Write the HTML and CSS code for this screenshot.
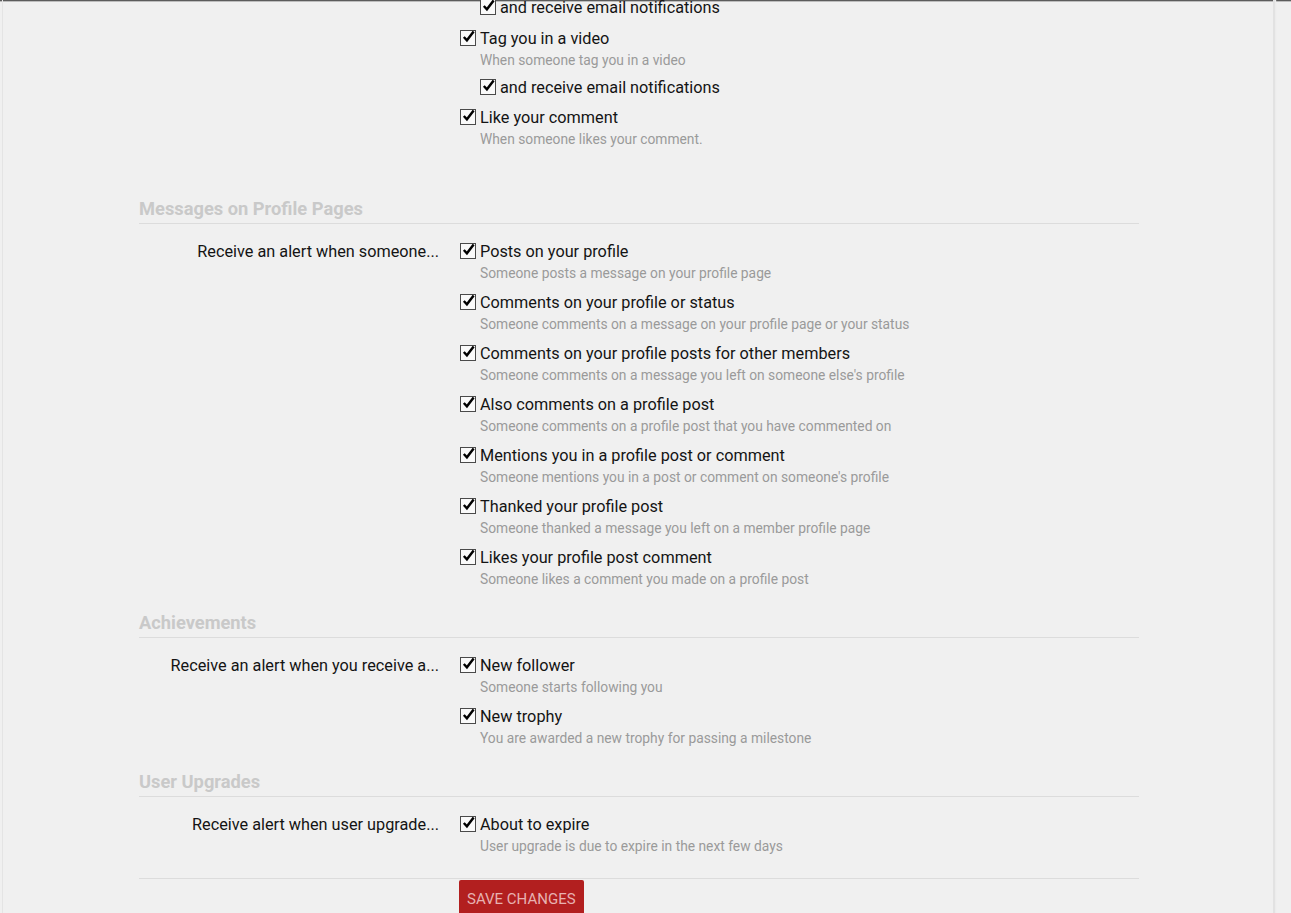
FILE: index.html
```html
<!DOCTYPE html>
<html lang="en">
<head>
<meta charset="utf-8">
<title>Alert Preferences</title>
<link rel="stylesheet" href="styles.css">
</head>
<body>
<div class="topbar"></div>
<div class="page">
  <form class="prefs">
    <div class="section first">
      <div class="unit">
        <div class="unit-label"></div>
        <ul class="opts">
          <li class="opt sub lead">
            <span class="cb"><svg viewBox="0 0 16 16"><path d="M3 7.5 L6.3 11 L13.5 1.5" /></svg></span>
            <span class="opt-text">and receive email notifications</span>
          </li>
          <li class="opt">
            <span class="cb"><svg viewBox="0 0 16 16"><path d="M3 7.5 L6.3 11 L13.5 1.5" /></svg></span>
            <span class="opt-text">Tag you in a video</span>
            <div class="hint">When someone tag you in a video</div>
            <div class="opt sub">
              <span class="cb"><svg viewBox="0 0 16 16"><path d="M3 7.5 L6.3 11 L13.5 1.5" /></svg></span>
              <span class="opt-text">and receive email notifications</span>
            </div>
          </li>
          <li class="opt">
            <span class="cb"><svg viewBox="0 0 16 16"><path d="M3 7.5 L6.3 11 L13.5 1.5" /></svg></span>
            <span class="opt-text">Like your comment</span>
            <div class="hint">When someone likes your comment.</div>
          </li>
        </ul>
      </div>
    </div>

    <div class="section">
      <h3 class="sec-head">Messages on Profile Pages</h3>
      <div class="unit">
        <div class="unit-label">Receive an alert when someone...</div>
        <ul class="opts">
          <li class="opt"><span class="cb"><svg viewBox="0 0 16 16"><path d="M3 7.5 L6.3 11 L13.5 1.5" /></svg></span><span class="opt-text">Posts on your profile</span><div class="hint">Someone posts a message on your profile page</div></li>
          <li class="opt"><span class="cb"><svg viewBox="0 0 16 16"><path d="M3 7.5 L6.3 11 L13.5 1.5" /></svg></span><span class="opt-text">Comments on your profile or status</span><div class="hint">Someone comments on a message on your profile page or your status</div></li>
          <li class="opt"><span class="cb"><svg viewBox="0 0 16 16"><path d="M3 7.5 L6.3 11 L13.5 1.5" /></svg></span><span class="opt-text">Comments on your profile posts for other members</span><div class="hint">Someone comments on a message you left on someone else's profile</div></li>
          <li class="opt"><span class="cb"><svg viewBox="0 0 16 16"><path d="M3 7.5 L6.3 11 L13.5 1.5" /></svg></span><span class="opt-text">Also comments on a profile post</span><div class="hint">Someone comments on a profile post that you have commented on</div></li>
          <li class="opt"><span class="cb"><svg viewBox="0 0 16 16"><path d="M3 7.5 L6.3 11 L13.5 1.5" /></svg></span><span class="opt-text">Mentions you in a profile post or comment</span><div class="hint">Someone mentions you in a post or comment on someone's profile</div></li>
          <li class="opt"><span class="cb"><svg viewBox="0 0 16 16"><path d="M3 7.5 L6.3 11 L13.5 1.5" /></svg></span><span class="opt-text">Thanked your profile post</span><div class="hint">Someone thanked a message you left on a member profile page</div></li>
          <li class="opt"><span class="cb"><svg viewBox="0 0 16 16"><path d="M3 7.5 L6.3 11 L13.5 1.5" /></svg></span><span class="opt-text">Likes your profile post comment</span><div class="hint">Someone likes a comment you made on a profile post</div></li>
        </ul>
      </div>
    </div>

    <div class="section">
      <h3 class="sec-head">Achievements</h3>
      <div class="unit">
        <div class="unit-label">Receive an alert when you receive a...</div>
        <ul class="opts">
          <li class="opt"><span class="cb"><svg viewBox="0 0 16 16"><path d="M3 7.5 L6.3 11 L13.5 1.5" /></svg></span><span class="opt-text">New follower</span><div class="hint">Someone starts following you</div></li>
          <li class="opt"><span class="cb"><svg viewBox="0 0 16 16"><path d="M3 7.5 L6.3 11 L13.5 1.5" /></svg></span><span class="opt-text">New trophy</span><div class="hint">You are awarded a new trophy for passing a milestone</div></li>
        </ul>
      </div>
    </div>

    <div class="section">
      <h3 class="sec-head">User Upgrades</h3>
      <div class="unit">
        <div class="unit-label">Receive alert when user upgrade...</div>
        <ul class="opts">
          <li class="opt"><span class="cb"><svg viewBox="0 0 16 16"><path d="M3 7.5 L6.3 11 L13.5 1.5" /></svg></span><span class="opt-text">About to expire</span><div class="hint">User upgrade is due to expire in the next few days</div></li>
        </ul>
      </div>
    </div>

    <div class="submit-row">
      <div></div>
      <div><button type="button" class="btn-save">SAVE CHANGES</button></div>
    </div>
  </form>
</div>
</body>
</html>
```

FILE: styles.css
```css
html, body {
  margin: 0;
  padding: 0;
  background: #f0f0f0;
  height: 100%;
  overflow: hidden;
}
body {
  font-family: Roboto, "Liberation Sans", Arial, sans-serif;
  color: #141414;
}
.topbar {
  height: 1px;
  background: #5c5c5c;
  border-bottom: 1px solid #bdbdbd;
}
.page {
  margin: 2px 16px 0 2px;
  border-left: 1px solid #e4e4e4;
  border-right: 2px solid #e2e2e2;
  box-shadow: 1px 0 1px #ececec;
  min-height: 1000px;
  padding-left: 136px;
}
.prefs {
  width: 1000px;
  margin-top: -7px;
}
.section {
  margin-top: 21px;
}
.section.first {
  margin-top: 0;
  margin-bottom: 47px;
}
.sec-head {
  margin: 0 0 17px;
  font-size: 18.3px;
  line-height: 22px;
  font-weight: 700;
  color: #c9c9c9;
  padding-bottom: 3px;
  border-bottom: 1px solid #dcdcdc;
}
.unit {
  display: grid;
  grid-template-columns: 300px 1fr;
  column-gap: 21px;
}
.unit-label {
  text-align: right;
  font-size: 16.25px;
  line-height: 22px;
}
.opts {
  list-style: none;
  margin: 0;
  padding: 0;
  display: flex;
  flex-direction: column;
  gap: 7px;
}
.opt {
  position: relative;
  padding-left: 20px;
  font-size: 16.25px;
  line-height: 22px;
}
.opt.sub {
  margin-left: 20px;
}
.opts > .opt.lead {
  margin-bottom: 2px;
}
.opt .opt.sub {
  margin-left: 0;
  margin-top: 5px;
  margin-bottom: 1px;
}
.opt-text {
  color: #141414;
}
.cb {
  position: absolute;
  left: 0;
  top: 2px;
  width: 14px;
  height: 14px;
  border: 1px solid #4a4a4a;
  background: #fafafa;
  box-sizing: content-box;
}
.cb svg {
  position: absolute;
  left: 0;
  top: -1px;
  width: 15px;
  height: 15px;
  overflow: visible;
}
.cb path {
  fill: none;
  stroke: #000;
  stroke-width: 2.6;
  stroke-linecap: butt;
  stroke-linejoin: miter;
}
.hint {
  font-size: 13.8px;
  line-height: 21px;
  padding-bottom: 1px;
  color: #9a9a9a;
}
.submit-row {
  display: grid;
  grid-template-columns: 300px 1fr;
  column-gap: 20px;
  margin-top: 20px;
  border-top: 1px solid #dcdcdc;
  padding-top: 1px;
}
.btn-save {
  font-family: Roboto, "Liberation Sans", Arial, sans-serif;
  font-size: 15px;
  background: #b21f1f;
  color: #e7b1b1;
  border: none;
  border-radius: 2px;
  height: 38px;
  padding: 0 8px;
  cursor: pointer;
}
```
